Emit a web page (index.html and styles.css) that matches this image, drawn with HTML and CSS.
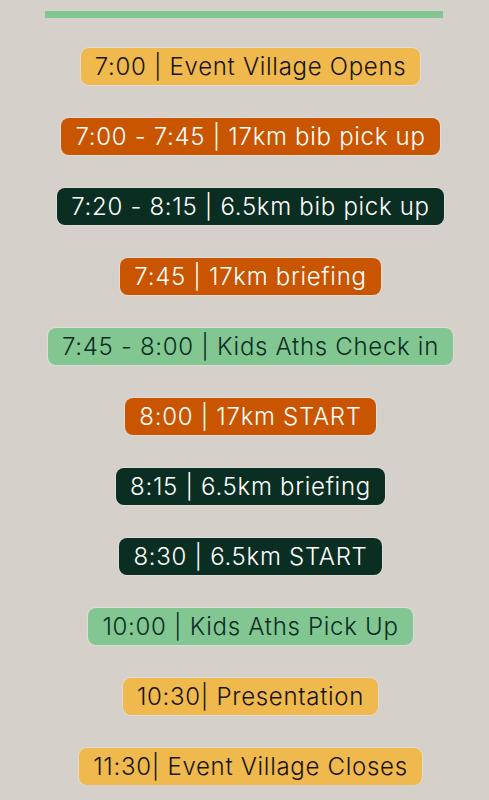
FILE: index.html
```html
<!DOCTYPE html>
<html lang="en">
<head>
    <meta charset="UTF-8">
    <meta name="viewport" content="width=device-width, initial-scale=1.0">
    <title>Race Day Schedule</title>
    <link rel="stylesheet" href="styles.css">
</head>
<body>
    <div class="schedule">
        <div class="rule"></div>
        <ul class="timeline">
            <li class="slot yellow">7:00 | Event Village Opens</li>
            <li class="slot orange">7:00 - 7:45 | 17km bib pick up</li>
            <li class="slot forest">7:20 - 8:15 | 6.5km bib pick up</li>
            <li class="slot orange">7:45 | 17km briefing</li>
            <li class="slot mint">7:45 - 8:00 | Kids Aths Check in</li>
            <li class="slot orange">8:00 | 17km START</li>
            <li class="slot forest">8:15 | 6.5km briefing</li>
            <li class="slot forest">8:30 | 6.5km START</li>
            <li class="slot mint">10:00 | Kids Aths Pick Up</li>
            <li class="slot yellow">10:30| Presentation</li>
            <li class="slot yellow">11:30| Event Village Closes</li>
        </ul>
    </div>
</body>
</html>
```

FILE: styles.css
```css
body {
    margin: 0;
    background-color: #d5d0ca;
    font-family: Inter, "Open Sans", sans-serif;
}
.schedule {
    padding-top: 11px;
}
.rule {
    height: 7px;
    margin: 0 46px 0 45px;
    background-color: #82c692;
}
.timeline {
    list-style: none;
    margin: 30px 0 0;
    padding: 0 0 0 12px;
    display: flex;
    flex-direction: column;
    align-items: center;
    gap: 33px;
}
.slot {
    padding: 0 14px;
    height: 37px;
    line-height: 37px;
    font-size: 24px;
    font-weight: 360;
    letter-spacing: 0.7px;
    border-radius: 8px;
    white-space: nowrap;
    box-shadow: 0 0 0 1px rgba(255, 255, 255, 0.25);
}
.yellow {
    background-color: #f0b94d;
    color: #161410;
}
.orange {
    background-color: #c95500;
    color: #ffffff;
}
.forest {
    background-color: #0b2e22;
    color: #ffffff;
}
.mint {
    background-color: #82c692;
    color: #0b2e22;
}
```
